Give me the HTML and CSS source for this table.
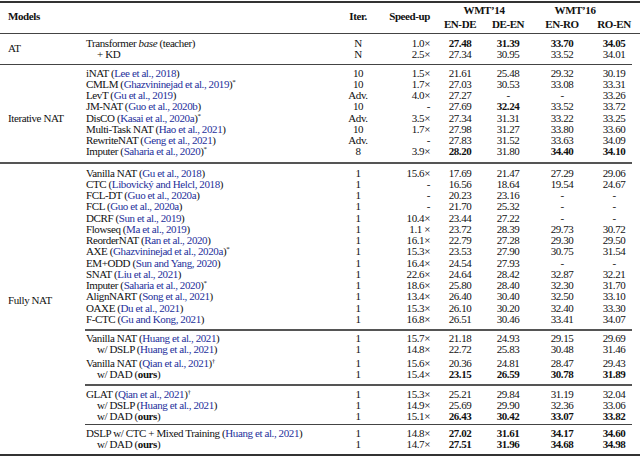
FILE: index.html
```html
<!DOCTYPE html>
<html lang="en">
<head>
<meta charset="utf-8">
<title>NAT results</title>
<link rel="stylesheet" href="styles.css">
</head>
<body>
<table class="results">
  <colgroup>
    <col class="w-grp"><col class="w-model"><col class="w-iter"><col class="w-speed">
    <col class="w-s1"><col class="w-s2"><col class="w-s3"><col class="w-s4"><col class="w-pad">
  </colgroup>
  <thead>
    <tr class="h1">
      <th class="hm" colspan="2" rowspan="2">Models</th>
      <th class="hc" rowspan="2">Iter.</th>
      <th class="hs" rowspan="2">Speed-up</th>
      <th class="hw" colspan="2">WMT’14</th>
      <th class="hw hw16" colspan="2">WMT’16</th>
      <th class="hp" rowspan="2"></th>
    </tr>
    <tr class="h2">
      <th>EN-DE</th><th>DE-EN</th><th>EN-RO</th><th class="c4">RO-EN</th>
    </tr>
  </thead>
  <tbody>
    <tr class="pt4">
      <td class="grp mid r1" rowspan="2">AT</td>
      <td class="m">Transformer <i>base</i> (teacher)</td><td>N</td><td class="sp">1.0×</td>
      <td><b>27.48</b></td><td><b>31.39</b></td><td><b>33.70</b></td><td class="c4"><b>34.05</b></td>
    </tr>
    <tr class="pb3 r1">
      <td class="m in">+ KD</td><td>N</td><td class="sp">2.5×</td>
      <td>27.34</td><td>30.95</td><td>33.52</td><td class="c4">34.01</td>
    </tr>

    <tr class="pt3">
      <td class="grp it r2" rowspan="8">Iterative NAT</td>
      <td class="m">iNAT (<span class="cite">Lee et al., 2018</span>)</td><td>10</td><td class="sp">1.5×</td>
      <td>21.61</td><td>25.48</td><td>29.32</td><td class="c4">30.19</td>
    </tr>
    <tr>
      <td class="m">CMLM (<span class="cite">Ghazvininejad et al., 2019</span>)<sup>*</sup></td><td>10</td><td class="sp">1.7×</td>
      <td>27.03</td><td>30.53</td><td>33.08</td><td class="c4">33.31</td>
    </tr>
    <tr>
      <td class="m">LevT (<span class="cite">Gu et al., 2019</span>)</td><td>Adv.</td><td class="sp">4.0×</td>
      <td>27.27</td><td>-</td><td>-</td><td class="c4">33.26</td>
    </tr>
    <tr>
      <td class="m">JM-NAT (<span class="cite">Guo et al., 2020b</span>)</td><td>10</td><td class="sp">-</td>
      <td>27.69</td><td><b>32.24</b></td><td>33.52</td><td class="c4">33.72</td>
    </tr>
    <tr>
      <td class="m">DisCO (<span class="cite">Kasai et al., 2020a</span>)<sup>*</sup></td><td>Adv.</td><td class="sp">3.5×</td>
      <td>27.34</td><td>31.31</td><td>33.22</td><td class="c4">33.25</td>
    </tr>
    <tr>
      <td class="m">Multi-Task NAT (<span class="cite">Hao et al., 2021</span>)</td><td>10</td><td class="sp">1.7×</td>
      <td>27.98</td><td>31.27</td><td>33.80</td><td class="c4">33.60</td>
    </tr>
    <tr>
      <td class="m">RewriteNAT (<span class="cite">Geng et al., 2021</span>)</td><td>Adv.</td><td class="sp">-</td>
      <td>27.83</td><td>31.52</td><td>33.63</td><td class="c4">34.09</td>
    </tr>
    <tr class="pb45 r2">
      <td class="m">Imputer (<span class="cite">Saharia et al., 2020</span>)<sup>*</sup></td><td>8</td><td class="sp">3.9×</td>
      <td><b>28.20</b></td><td>31.80</td><td><b>34.40</b></td><td class="c4"><b>34.10</b></td>
    </tr>

    <tr class="pt35">
      <td class="grp fu" rowspan="23">Fully NAT</td>
      <td class="m">Vanilla NAT (<span class="cite">Gu et al., 2018</span>)</td><td>1</td><td class="sp">15.6×</td>
      <td>17.69</td><td>21.47</td><td>27.29</td><td class="c4">29.06</td>
    </tr>
    <tr>
      <td class="m">CTC (<span class="cite">Libovický and Helcl, 2018</span>)</td><td>1</td><td class="sp">-</td>
      <td>16.56</td><td>18.64</td><td>19.54</td><td class="c4">24.67</td>
    </tr>
    <tr>
      <td class="m">FCL-DT (<span class="cite">Guo et al., 2020a</span>)</td><td>1</td><td class="sp">-</td>
      <td>20.23</td><td>23.16</td><td>-</td><td class="c4">-</td>
    </tr>
    <tr>
      <td class="m">FCL (<span class="cite">Guo et al., 2020a</span>)</td><td>1</td><td class="sp">-</td>
      <td>21.70</td><td>25.32</td><td>-</td><td class="c4">-</td>
    </tr>
    <tr>
      <td class="m">DCRF (<span class="cite">Sun et al., 2019</span>)</td><td>1</td><td class="sp">10.4×</td>
      <td>23.44</td><td>27.22</td><td>-</td><td class="c4">-</td>
    </tr>
    <tr>
      <td class="m">Flowseq (<span class="cite">Ma et al., 2019</span>)</td><td>1</td><td class="sp">1.1 ×</td>
      <td>23.72</td><td>28.39</td><td>29.73</td><td class="c4">30.72</td>
    </tr>
    <tr>
      <td class="m">ReorderNAT (<span class="cite">Ran et al., 2020</span>)</td><td>1</td><td class="sp">16.1×</td>
      <td>22.79</td><td>27.28</td><td>29.30</td><td class="c4">29.50</td>
    </tr>
    <tr>
      <td class="m">AXE (<span class="cite">Ghazvininejad et al., 2020a</span>)<sup>*</sup></td><td>1</td><td class="sp">15.3×</td>
      <td>23.53</td><td>27.90</td><td>30.75</td><td class="c4">31.54</td>
    </tr>
    <tr>
      <td class="m">EM+ODD (<span class="cite">Sun and Yang, 2020</span>)</td><td>1</td><td class="sp">16.4×</td>
      <td>24.54</td><td>27.93</td><td>-</td><td class="c4">-</td>
    </tr>
    <tr>
      <td class="m">SNAT (<span class="cite">Liu et al., 2021</span>)</td><td>1</td><td class="sp">22.6×</td>
      <td>24.64</td><td>28.42</td><td>32.87</td><td class="c4">32.21</td>
    </tr>
    <tr>
      <td class="m">Imputer (<span class="cite">Saharia et al., 2020</span>)<sup>*</sup></td><td>1</td><td class="sp">18.6×</td>
      <td>25.80</td><td>28.40</td><td>32.30</td><td class="c4">31.70</td>
    </tr>
    <tr>
      <td class="m">AlignNART (<span class="cite">Song et al., 2021</span>)</td><td>1</td><td class="sp">13.4×</td>
      <td>26.40</td><td>30.40</td><td>32.50</td><td class="c4">33.10</td>
    </tr>
    <tr>
      <td class="m">OAXE (<span class="cite">Du et al., 2021</span>)</td><td>1</td><td class="sp">15.3×</td>
      <td>26.10</td><td>30.20</td><td>32.40</td><td class="c4">33.30</td>
    </tr>
    <tr class="pb4 r2">
      <td class="m">F-CTC (<span class="cite">Gu and Kong, 2021</span>)</td><td>1</td><td class="sp">16.8×</td>
      <td>26.51</td><td>30.46</td><td>33.41</td><td class="c4">34.07</td>
    </tr>

    <tr class="pt2">
      <td class="m">Vanilla NAT (<span class="cite">Huang et al., 2021</span>)</td><td>1</td><td class="sp">15.7×</td>
      <td>21.18</td><td>24.93</td><td>29.15</td><td class="c4">29.69</td>
    </tr>
    <tr>
      <td class="m in">w/ DSLP (<span class="cite">Huang et al., 2021</span>)</td><td>1</td><td class="sp">14.8×</td>
      <td>22.72</td><td>25.83</td><td>30.48</td><td class="c4">31.46</td>
    </tr>
    <tr class="pt2">
      <td class="m">Vanilla NAT (<span class="cite">Qian et al., 2021</span>)<sup>†</sup></td><td>1</td><td class="sp">15.6×</td>
      <td>20.36</td><td>24.81</td><td>28.47</td><td class="c4">29.43</td>
    </tr>
    <tr class="pb4 r2">
      <td class="m in">w/ DAD (<b>ours</b>)</td><td>1</td><td class="sp">15.4×</td>
      <td><b>23.15</b></td><td><b>26.59</b></td><td><b>30.78</b></td><td class="c4"><b>31.89</b></td>
    </tr>

    <tr class="pt25">
      <td class="m">GLAT (<span class="cite">Qian et al., 2021</span>)<sup>†</sup></td><td>1</td><td class="sp">15.3×</td>
      <td>25.21</td><td>29.84</td><td>31.19</td><td class="c4">32.04</td>
    </tr>
    <tr>
      <td class="m in">w/ DSLP (<span class="cite">Huang et al., 2021</span>)</td><td>1</td><td class="sp">14.9×</td>
      <td>25.69</td><td>29.90</td><td>32.36</td><td class="c4">33.06</td>
    </tr>
    <tr class="pb15 r1">
      <td class="m in">w/ DAD (<b>ours</b>)</td><td>1</td><td class="sp">15.1×</td>
      <td><b>26.43</b></td><td><b>30.42</b></td><td><b>33.07</b></td><td class="c4"><b>33.82</b></td>
    </tr>

    <tr class="pt3">
      <td class="m">DSLP w/ CTC + Mixed Training (<span class="cite">Huang et al., 2021</span>)</td><td>1</td><td class="sp">14.8×</td>
      <td><b>27.02</b></td><td><b>31.61</b></td><td><b>34.17</b></td><td class="c4"><b>34.60</b></td>
    </tr>
    <tr class="pb4">
      <td class="m in">w/ DAD (<b>ours</b>)</td><td>1</td><td class="sp">14.7×</td>
      <td><b>27.51</b></td><td><b>31.96</b></td><td><b>34.68</b></td><td class="c4"><b>34.98</b></td>
    </tr>
  </tbody>
</table>
</body>
</html>
```

FILE: styles.css
```css
html, body {
  margin: 0;
  padding: 0;
  background: #ffffff;
}

body {
  font-family: "Liberation Serif", "Times New Roman", serif;
  font-size: 11px;
  letter-spacing: -0.4px;
  color: #111111;
}

.results {
  width: 640px;
  table-layout: fixed;
  border-collapse: separate;
  border-spacing: 0;
  margin-top: 1px;
  border-top: 2px solid #333333;
  border-bottom: 2px solid #333333;
}

.w-grp { width: 85px; }
.w-model { width: 255px; }
.w-iter { width: 36px; }
.w-speed { width: 60px; }
.w-s1 { width: 48px; }
.w-s2 { width: 48px; }
.w-s3 { width: 60px; }
.w-s4 { width: 40px; }
.w-pad { width: 8px; }

th, td {
  padding: 0;
  text-align: center;
  white-space: nowrap;
  font-weight: normal;
}

th {
  font-weight: bold;
  line-height: 11px;
}

.h1 th {
  padding-top: 2px;
  padding-bottom: 1px;
}

.h2 th {
  padding-top: 2px;
  padding-bottom: 3px;
  border-bottom: 1px solid #444444;
}

.h1 th.hm,
.h1 th.hc,
.h1 th.hs,
.h1 th.hp {
  vertical-align: middle;
  padding-top: 0;
  padding-bottom: 4px;
  border-bottom: 1px solid #444444;
}

.h1 th.hm {
  text-align: left;
  padding-left: 8px;
}

.h1 th.hs {
  text-align: right;
  padding-right: 6px;
}

.h1 th.hw16 {
  padding-right: 14px;
}

td {
  line-height: 11.25px;
}

td.m {
  text-align: left;
  padding-left: 1px;
}

td.m.in {
  padding-left: 12px;
}

td.sp {
  text-align: right;
  padding-right: 6px;
}

th.c4, td.c4 {
  padding-left: 4px;
}

td.grp {
  text-align: left;
  padding-left: 8px;
}

td.grp.mid { vertical-align: middle; }
td.grp.it { vertical-align: top; padding-top: 48px; }
td.grp.fu { vertical-align: top; padding-top: 131px; }

tr.pt2 > td:not(.grp) { padding-top: 2px; }
tr.pt25 > td:not(.grp) { padding-top: 2.5px; }
tr.pt3 > td:not(.grp) { padding-top: 3px; }
tr.pt35 > td:not(.grp) { padding-top: 3.5px; }
tr.pt4 > td:not(.grp) { padding-top: 4px; }

tr.pb15 > td:not(.grp) { padding-bottom: 1.5px; }
tr.pb3 > td:not(.grp) { padding-bottom: 3px; }
tr.pb4 > td:not(.grp) { padding-bottom: 4px; }
tr.pb45 > td:not(.grp) { padding-bottom: 4.5px; }

tr.r1 > td:not(.grp) { border-bottom: 1px solid #444444; }
tr.r2 > td:not(.grp) { border-bottom: 2px solid #555555; }
td.grp.r1 { border-bottom: 1px solid #444444; }
td.grp.r2 { border-bottom: 2px solid #555555; }

.cite {
  color: #25309b;
}

sup {
  font-size: 7px;
  line-height: 0;
  vertical-align: 4px;
  letter-spacing: 0;
}

b {
  font-weight: bold;
}
```
